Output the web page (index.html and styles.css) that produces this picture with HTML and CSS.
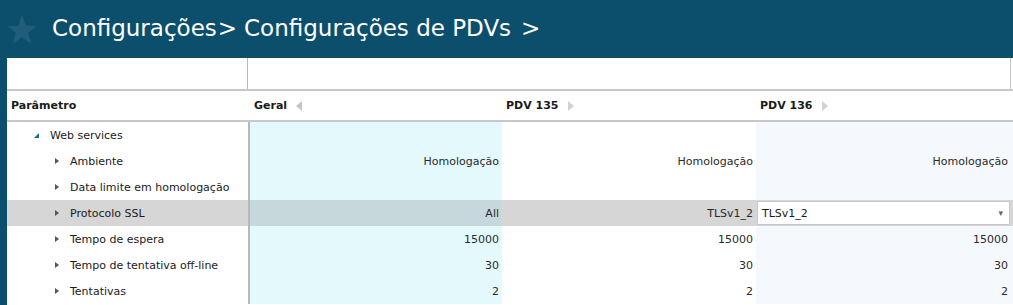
FILE: index.html
```html
<!DOCTYPE html>
<html>

<head>
    <title>Configurações de PDVs</title>
    <meta name="viewport" content="width=device-width, initial-scale=1">
    <link rel="stylesheet" href="styles.css">
</head>

<body>

    <div class="topbar">
        <svg class="star" width="32" height="32" viewBox="0 0 30 30">
            <polygon points="15,1 18.6,11 29,11.2 20.8,17.6 23.8,28 15,21.8 6.2,28 9.2,17.6 1,11.2 11.4,11" fill="#1f5d79" />
        </svg>
        <div class="breadcrumb">
            <span>Configurações</span>
            <span class="sep">&gt;</span>
            <span>Configurações de PDVs</span>
            <span class="sep sep-last">&gt;</span>
        </div>
    </div>

    <div class="panel">
        <div class="filter-row">
            <div class="filter-left"></div>
            <div class="filter-right"></div>
        </div>

        <div class="row head-row">
            <div class="cell head">Parâmetro</div>
            <div class="cell head">Geral <span class="tri tri-left"></span></div>
            <div class="cell head">PDV 135 <span class="tri tri-right"></span></div>
            <div class="cell head">PDV 136 <span class="tri tri-right"></span></div>
        </div>

        <div class="row">
            <div class="cell param group"><span class="open"></span>Web services</div>
            <div class="cell val geral"></div>
            <div class="cell val"></div>
            <div class="cell val pdv"></div>
        </div>
        <div class="row">
            <div class="cell param child"><span class="closed"></span>Ambiente</div>
            <div class="cell val geral">Homologação</div>
            <div class="cell val">Homologação</div>
            <div class="cell val pdv">Homologação</div>
        </div>
        <div class="row">
            <div class="cell param child"><span class="closed"></span>Data limite em homologação</div>
            <div class="cell val geral"></div>
            <div class="cell val"></div>
            <div class="cell val pdv"></div>
        </div>
        <div class="row selected">
            <div class="cell param child"><span class="closed"></span>Protocolo SSL</div>
            <div class="cell val geral">All</div>
            <div class="cell val">TLSv1_2</div>
            <div class="cell val pdv">
                <div class="select-box">
                    <span>TLSv1_2</span>
                    <span class="arrow">▾</span>
                </div>
            </div>
        </div>
        <div class="row">
            <div class="cell param child"><span class="closed"></span>Tempo de espera</div>
            <div class="cell val geral">15000</div>
            <div class="cell val">15000</div>
            <div class="cell val pdv">15000</div>
        </div>
        <div class="row">
            <div class="cell param child"><span class="closed"></span>Tempo de tentativa off-line</div>
            <div class="cell val geral">30</div>
            <div class="cell val">30</div>
            <div class="cell val pdv">30</div>
        </div>
        <div class="row">
            <div class="cell param child"><span class="closed"></span>Tentativas</div>
            <div class="cell val geral">2</div>
            <div class="cell val">2</div>
            <div class="cell val pdv">2</div>
        </div>
    </div>

</body>

</html>
```

FILE: styles.css
```css
body {
    margin: 0;
    background-color: #0c4f6c;
    font-family: "DejaVu Sans", Verdana, sans-serif;
    font-size: 11px;
    color: #1a1a1a;
    overflow: hidden;
}

.topbar {
    height: 58px;
    display: flex;
    align-items: center;
    padding-left: 6px;
}

.star {
    margin-top: 2px;
}

.breadcrumb {
    display: flex;
    align-items: center;
    margin-left: 14px;
    margin-top: -3px;
    color: white;
    font-size: 23px;
}

.breadcrumb .sep {
    margin: 0 7px 0 1px;
}

.breadcrumb .sep-last {
    margin-left: 10px;
}

.panel {
    margin-left: 7px;
    background-color: white;
    height: 247px;
}

.filter-row {
    display: flex;
    height: 31px;
    border-bottom: 2px solid #c8c8c8;
}

.filter-left {
    width: 240px;
    border-right: 1px solid #bbb;
}

.filter-right {
    flex: 1;
    margin-right: 2px;
    border-right: 1px solid #c8c8c8;
}

.row {
    display: grid;
    grid-template-columns: 243px 252px 254px 1fr;
    height: 26px;
}

.head-row {
    height: 29px;
    border-bottom: 2px solid #c8c8c8;
}

.cell {
    display: flex;
    align-items: center;
}

.head {
    font-weight: bold;
    color: #1a1a1a;
    padding-left: 4px;
}

.tri {
    display: inline-block;
    width: 0;
    height: 0;
    margin-left: 9px;
    border-top: 5px solid transparent;
    border-bottom: 5px solid transparent;
}

.tri-left {
    border-right: 6px solid #c6c6c6;
}

.tri-right {
    border-left: 6px solid #d2d2d2;
}

.param {
    border-right: 2px solid #b8b8b8;
}

.group {
    padding-left: 27px;
}

.child {
    padding-left: 48px;
}

.open {
    display: inline-block;
    width: 0;
    height: 0;
    margin-right: 11px;
    border-left: 5px solid transparent;
    border-bottom: 5px solid #1f6f8b;
}

.closed {
    display: inline-block;
    width: 0;
    height: 0;
    margin-right: 11px;
    border-top: 3px solid transparent;
    border-bottom: 3px solid transparent;
    border-left: 4px solid #555;
}

.val {
    justify-content: flex-end;
    padding-right: 3px;
    color: #2a2a2a;
}

.geral {
    background-color: #e3f9fc;
}

.pdv {
    background-color: #f5f9fe;
    padding-right: 5px;
}

.selected .cell {
    background-color: #d6d6d6;
}

.selected .geral {
    background-color: #c6d8dc;
}

.selected .pdv {
    padding: 1px 3px 1px 1px;
}

.select-box {
    flex: 1;
    height: 22px;
    display: flex;
    align-items: center;
    justify-content: space-between;
    background-color: white;
    border: 1px solid #c8c8c8;
    padding: 0 6px 0 4px;
    color: #1a1a1a;
}

.select-box .arrow {
    font-size: 9px;
    color: #666;
}
```
